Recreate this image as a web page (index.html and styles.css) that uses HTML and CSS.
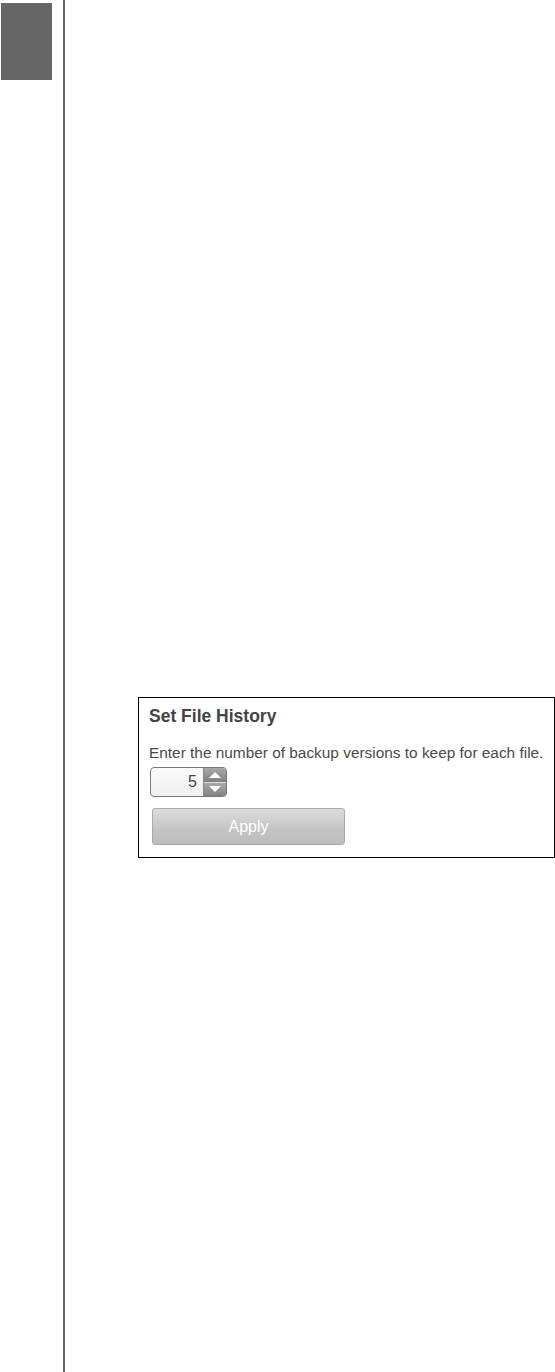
FILE: index.html
```html
<!DOCTYPE html>
<html>
<head>
    <title>Set File History</title>
    <link rel="stylesheet" href="styles.css">
</head>
<body>
    <div class="page">
        <div class="side">
            <div class="tab"></div>
        </div>
        <div class="main">
            <div class="panel">
                <h2>Set File History</h2>
                <p>Enter the number of backup versions to keep for each file.</p>
                <div class="spinner">
                    <div class="value">5</div>
                    <div class="arrows">
                        <div class="arrow up">
                            <svg width="14" height="8" viewBox="0 0 14 8"><path d="M1 7 L7 1 L13 7 Z" fill="#fff"/></svg>
                        </div>
                        <div class="arrow down">
                            <svg width="14" height="8" viewBox="0 0 14 8"><path d="M1 1 L7 7 L13 1 Z" fill="#fff"/></svg>
                        </div>
                    </div>
                </div>
                <button class="apply">Apply</button>
            </div>
        </div>
    </div>
</body>
</html>
```

FILE: styles.css
```css
body {
    margin: 0;
    font-family: "Liberation Sans", Arial, sans-serif;
    background: white;
}

.page {
    display: flex;
    min-height: 1372px;
}

.side {
    width: 63px;
    border-right: 2px solid #666;
}

.tab {
    width: 51px;
    height: 77px;
    margin: 3px 0 0 1px;
    background: #666;
}

.main {
    padding: 697px 0 0 73px;
}

.panel {
    box-sizing: border-box;
    width: 417px;
    height: 161px;
    border: 1px solid #000;
    padding: 8px 10px 0 10px;
}

h2 {
    margin: 0;
    font-size: 17.5px;
    font-weight: bold;
    color: #444;
    line-height: 20px;
}

p {
    margin: 18px 0 5px;
    font-size: 15.4px;
    color: #4a4a4a;
    line-height: 18px;
    white-space: nowrap;
}

.spinner {
    display: flex;
    width: 77px;
    height: 30px;
    margin-left: 1px;
    border: 1px solid #777;
    border-radius: 4px;
    box-sizing: border-box;
    overflow: hidden;
    background: linear-gradient(#fafafa, #f0f0f0);
}

.value {
    flex: 1;
    text-align: right;
    padding-right: 6px;
    font-size: 16px;
    line-height: 28px;
    color: #444;
}

.arrows {
    width: 22px;
    display: flex;
    flex-direction: column;
    border-left: 1px solid #888;
}

.arrow {
    flex: 1;
    display: flex;
    align-items: center;
    justify-content: center;
    background: linear-gradient(#a8a8a8, #808080);
}

.arrow.up {
    border-bottom: 1px solid #ddd;
}

.apply {
    display: block;
    margin: 11px 0 0 3px;
    width: 193px;
    height: 37px;
    font-family: "Liberation Sans", Arial, sans-serif;
    font-size: 16px;
    color: white;
    border: 1px solid #aaa;
    border-radius: 3px;
    background: linear-gradient(#dcdcdc, #c4c4c4 60%, #bdbdbd);
}
```
